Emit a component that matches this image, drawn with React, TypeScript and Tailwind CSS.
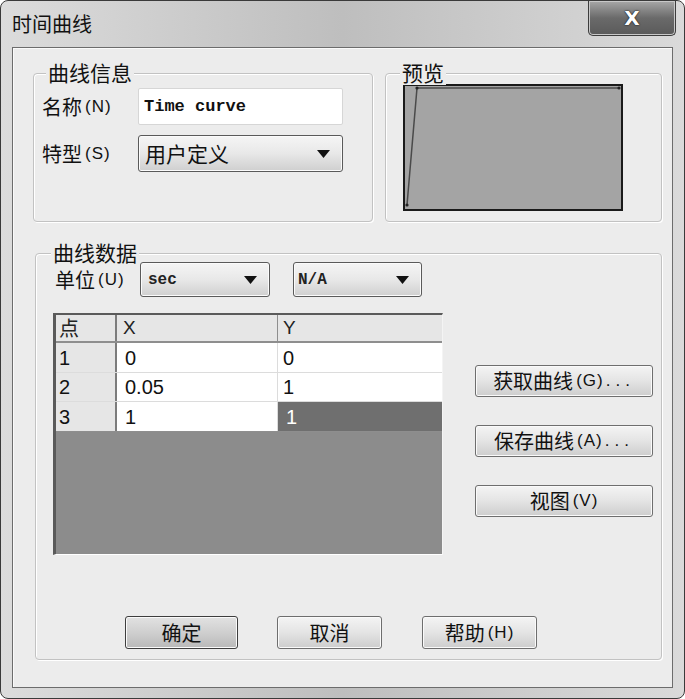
const CJK = "font-['Noto_Sans_CJK_SC','Noto_Sans',sans-serif]";
const SANS = "font-['Liberation_Sans','Noto_Sans_CJK_SC',sans-serif]";
const MONO = "font-['Liberation_Mono',monospace]";

function Key({ k }: { k: string }) {
  return <span className={`${SANS} ml-[3px] text-[17px] tracking-[1px]`}>({k})</span>;
}

function Arrow() {
  return (
    <svg width="13" height="8" viewBox="0 0 13 8">
      <path d="M0 0H13L6.5 8Z" fill="#111" />
    </svg>
  );
}

function Combo({ className, children }: { className: string; children: React.ReactNode }) {
  return (
    <div
      className={`flex items-center justify-between rounded-[3px] border border-[#5a5a5a] bg-linear-to-b from-[#f5f5f5] via-[#e8e8e8] to-[#cfcfcf] pr-[12px] shadow-[inset_0_0_0_1px_#fbfbfb] ${className}`}
    >
      {children}
      <Arrow />
    </div>
  );
}

function Btn({ className, children }: { className: string; children: React.ReactNode }) {
  return (
    <div
      className={`flex items-center justify-center rounded-[3px] border bg-linear-to-b shadow-[inset_0_0_0_1px_#fafafa] ${CJK} text-[20px] text-[#111] ${className}`}
    >
      {children}
    </div>
  );
}

function Group({
  label,
  labelLeft,
  className,
  children,
}: {
  label: string;
  labelLeft: string;
  className: string;
  children: React.ReactNode;
}) {
  return (
    <div
      className={`relative rounded-[4px] border border-[#c2c2c2] shadow-[inset_1px_1px_0_#ffffff,1px_1px_0_#ffffff] ${className}`}
    >
      <span
        className={`absolute -top-[15px] ${labelLeft} bg-[#ececec] px-[2px] ${CJK} text-[21px] leading-[26px] text-[#111]`}
      >
        {label}
      </span>
      {children}
    </div>
  );
}

export default function App() {
  const rows = [
    { n: '1', x: '0', y: '0', h: 'h-[30px]' },
    { n: '2', x: '0.05', y: '1', h: 'h-[29px]' },
    { n: '3', x: '1', y: '1', h: 'h-[30px]', sel: true },
  ];

  return (
    <div className="h-[699px] w-[685px] bg-white">
      <div className="flex h-[699px] w-[685px] flex-col rounded-[8px] border border-[#3a3a3a] bg-linear-to-r from-[#dcdcdc] via-[#bebebe] to-[#dadada]">
        {/* Title bar */}
        <div className="flex h-[46px] items-start justify-between">
          <span className={`ml-[11px] mt-[10px] ${CJK} text-[20px] leading-[26px] text-[#111]`}>时间曲线</span>
          <div className="mr-[8px] flex h-[35px] w-[88px] items-center justify-center rounded-b-[5px] border border-t-0 border-[#3d3d3d] bg-linear-to-b from-[#a8a8a8] via-[#6a6a6a] to-[#5a5a5a] shadow-[inset_0_0_0_1px_#c8c8c8]">
            <span className="font-['DejaVu_Sans',sans-serif] text-[20px] font-bold leading-none text-white [text-shadow:0_0_2px_#222,0_0_1px_#000]">
              X
            </span>
          </div>
        </div>

        {/* Client area */}
        <div className="mx-[11px] flex h-[641px] flex-col border border-[#6c6c6c] bg-[#ececec] pl-[20px] pt-[25px] shadow-[inset_1px_1px_0_#fafafa]">
          <div className="flex gap-[12px]">
            {/* 曲线信息 */}
            <Group label="曲线信息" labelLeft="left-[12px]" className="h-[149px] w-[340px]">
              <div className="flex flex-col gap-[10px] pt-[14px]">
                <div className="flex h-[37px] items-center">
                  <span className={`flex w-[104px] items-center pl-[8px] ${CJK} text-[20px] text-[#111]`}>
                    名称<Key k="N" />
                  </span>
                  <div className="flex h-[37px] w-[205px] items-center rounded-[2px] border border-[#d6d6d6] bg-white pl-[5px]">
                    <span className={`${MONO} text-[17px] font-bold text-[#111]`}>Time curve</span>
                  </div>
                </div>
                <div className="flex h-[37px] items-center">
                  <span className={`flex w-[104px] items-center pl-[8px] ${CJK} text-[20px] text-[#111]`}>
                    特型<Key k="S" />
                  </span>
                  <Combo className="h-[37px] w-[205px] pl-[6px]">
                    <span className={`${CJK} text-[21px] text-[#111]`}>用户定义</span>
                  </Combo>
                </div>
              </div>
            </Group>

            {/* 预览 */}
            <Group label="预览" labelLeft="left-[14px]" className="h-[149px] w-[277px]">
              <div className="ml-[17px] mt-[10px] h-[127px] w-[220px] border-2 border-[#1a1a1a] bg-[#a4a4a4]">
                <svg width="216" height="123" viewBox="0 0 216 123">
                  <polyline points="2,119 12,2 214,2" fill="none" stroke="#4a4a4a" strokeWidth="1.5" />
                  <circle cx="2" cy="119" r="1.6" fill="#222" />
                  <circle cx="12" cy="2" r="1.6" fill="#222" />
                  <circle cx="214" cy="2" r="1.6" fill="#222" />
                </svg>
              </div>
            </Group>
          </div>

          {/* 曲线数据 */}
          <Group label="曲线数据" labelLeft="left-[15px]" className="ml-[2px] mt-[31px] h-[407px] w-[627px]">
            <div className="flex flex-col">
              <div className="mt-[8px] flex items-center">
                <span className={`flex w-[104px] items-center pl-[19px] ${CJK} text-[20px] text-[#111]`}>
                  单位<Key k="U" />
                </span>
                <Combo className="h-[35px] w-[130px] pl-[7px]">
                  <span className={`${MONO} text-[16px] font-bold text-[#222]`}>sec</span>
                </Combo>
                <Combo className="ml-[23px] h-[35px] w-[129px] pl-[4px]">
                  <span className={`${MONO} text-[16px] font-bold text-[#222]`}>N/A</span>
                </Combo>
              </div>

              <div className="mt-[16px] flex">
                {/* Table */}
                <div className="ml-[17px] flex h-[242px] w-[390px] flex-col border-b border-l-[3px] border-r border-t-2 border-b-white border-l-[#5a5a5a] border-r-[#f4f4f4] border-t-[#5a5a5a] bg-[#8c8c8c]">
                  <div className={`flex h-[28px] border-b-2 border-[#8e8e8e] bg-[#e6e6e6] ${SANS} text-[19px] text-[#222]`}>
                    <div className={`flex w-[61px] items-center border-r-2 border-[#7c7c7c] pl-[3px] ${CJK} text-[20px]`}>点</div>
                    <div className="flex w-[161px] items-center border-r border-[#8e8e8e] pl-[6px]">X</div>
                    <div className="flex flex-1 items-center pl-[5px]">Y</div>
                  </div>
                  {rows.map((r) => (
                    <div
                      key={r.n}
                      className={`flex ${r.h} border-b ${r.sel ? 'border-[#8e8e8e]' : 'border-[#dcdcdc]'} ${SANS} text-[20px] text-[#111]`}
                    >
                      <div className="flex w-[61px] items-center border-r-2 border-[#7c7c7c] bg-[#e6e6e6] pl-[3px]">{r.n}</div>
                      <div className="flex w-[161px] items-center border-r border-[#dcdcdc] bg-white pl-[8px]">{r.x}</div>
                      {r.sel ? (
                        <div className="flex flex-1 items-center bg-[#6f6f6f] pl-[8px] text-white">{r.y}</div>
                      ) : (
                        <div className="flex flex-1 items-center bg-white pl-[5px]">{r.y}</div>
                      )}
                    </div>
                  ))}
                </div>

                {/* Side buttons */}
                <div className="ml-[32px] flex flex-col gap-[28px] pt-[52px]">
                  <Btn className="h-[32px] w-[178px] border-[#6e6e6e] from-[#f4f4f4] via-[#e4e4e4] to-[#cdcdcd]">
                    获取曲线<Key k="G" />
                    <span className={`${SANS} ml-[2px] text-[17px] tracking-[5px]`}>...</span>
                  </Btn>
                  <Btn className="h-[32px] w-[178px] border-[#6e6e6e] from-[#f4f4f4] via-[#e4e4e4] to-[#cdcdcd]">
                    保存曲线<Key k="A" />
                    <span className={`${SANS} ml-[2px] text-[17px] tracking-[5px]`}>...</span>
                  </Btn>
                  <Btn className="h-[32px] w-[178px] border-[#6e6e6e] from-[#f4f4f4] via-[#e4e4e4] to-[#cdcdcd]">
                    视图<Key k="V" />
                  </Btn>
                </div>
              </div>

              {/* Bottom buttons */}
              <div className="ml-[89px] mt-[61px] flex">
                <Btn className="h-[33px] w-[113px] border-[#3e3e3e] from-[#e2e2e2] via-[#cfcfcf] to-[#b9b9b9]">确定</Btn>
                <Btn className="ml-[39px] h-[33px] w-[105px] border-[#6e6e6e] from-[#f4f4f4] via-[#e4e4e4] to-[#cdcdcd]">取消</Btn>
                <Btn className="ml-[40px] h-[33px] w-[115px] border-[#6e6e6e] from-[#f4f4f4] via-[#e4e4e4] to-[#cdcdcd]">
                  帮助<Key k="H" />
                </Btn>
              </div>
            </div>
          </Group>
        </div>
      </div>
    </div>
  );
}
